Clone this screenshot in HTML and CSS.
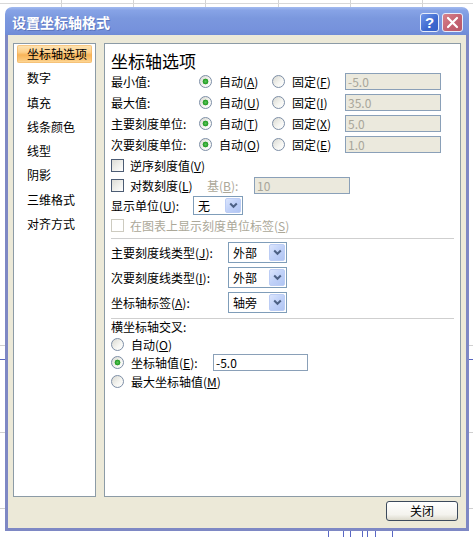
FILE: index.html
```html
<!DOCTYPE html>
<html lang="zh-CN">
<head>
<meta charset="utf-8">
<title>设置坐标轴格式</title>
<link rel="stylesheet" href="styles.css">
</head>
<body>
<div class="dialog">
  <div class="titlebar">
    <span class="title">设置坐标轴格式</span>
    <div class="tb-buttons">
      <span class="tb-btn help">?</span>
      <span class="tb-btn close">
        <svg width="13" height="13" viewBox="0 0 13 13"><path d="M2 2 L11 11 M11 2 L2 11" stroke="#fff" stroke-width="2.2" stroke-linecap="round"/></svg>
      </span>
    </div>
  </div>
  <div class="client">
    <div class="panels">
      <ul class="nav">
        <li class="active">坐标轴选项</li>
        <li>数字</li>
        <li>填充</li>
        <li>线条颜色</li>
        <li>线型</li>
        <li>阴影</li>
        <li>三维格式</li>
        <li>对齐方式</li>
      </ul>
      <div class="pane">
        <h1 class="pane-title">坐标轴选项</h1>

        <div class="row">
          <span class="lbl">最小值:</span>
          <span class="opt"><span class="radio on"></span>自动(<u>A</u>)</span>
          <span class="opt"><span class="radio"></span>固定(<u>F</u>)</span>
          <span class="field disabled">-5.0</span>
        </div>
        <div class="row">
          <span class="lbl">最大值:</span>
          <span class="opt"><span class="radio on"></span>自动(<u>U</u>)</span>
          <span class="opt"><span class="radio"></span>固定(<u>I</u>)</span>
          <span class="field disabled">35.0</span>
        </div>
        <div class="row">
          <span class="lbl">主要刻度单位:</span>
          <span class="opt"><span class="radio on"></span>自动(<u>T</u>)</span>
          <span class="opt"><span class="radio"></span>固定(<u>X</u>)</span>
          <span class="field disabled">5.0</span>
        </div>
        <div class="row">
          <span class="lbl">次要刻度单位:</span>
          <span class="opt"><span class="radio on"></span>自动(<u>O</u>)</span>
          <span class="opt"><span class="radio"></span>固定(<u>E</u>)</span>
          <span class="field disabled">1.0</span>
        </div>

        <div class="crow">
          <span class="check"></span>逆序刻度值(<u>V</u>)
        </div>
        <div class="crow">
          <span class="cgroup"><span class="check"></span>对数刻度(<u>L</u>)</span>
          <span class="base-lbl">基(<u>B</u>):</span>
          <span class="field disabled">10</span>
        </div>
        <div class="crow">
          <span class="unit-lbl">显示单位(<u>U</u>):</span>
          <span class="combo small"><span class="combo-val">无</span><span class="combo-btn"><svg width="9" height="7" viewBox="0 0 9 7"><path d="M1.2 1.5 L4.5 4.8 L7.8 1.5" fill="none" stroke="#4d6185" stroke-width="2"/></svg></span></span>
        </div>
        <div class="crow dim">
          <span class="check off"></span>在图表上显示刻度单位标签(<u>S</u>)
        </div>

        <div class="sep first"></div>

        <div class="srow">
          <span class="sel-lbl">主要刻度线类型(<u>J</u>):</span>
          <span class="combo"><span class="combo-val">外部</span><span class="combo-btn"><svg width="9" height="7" viewBox="0 0 9 7"><path d="M1.2 1.5 L4.5 4.8 L7.8 1.5" fill="none" stroke="#4d6185" stroke-width="2"/></svg></span></span>
        </div>
        <div class="srow">
          <span class="sel-lbl">次要刻度线类型(<u>I</u>):</span>
          <span class="combo"><span class="combo-val">外部</span><span class="combo-btn"><svg width="9" height="7" viewBox="0 0 9 7"><path d="M1.2 1.5 L4.5 4.8 L7.8 1.5" fill="none" stroke="#4d6185" stroke-width="2"/></svg></span></span>
        </div>
        <div class="srow">
          <span class="sel-lbl">坐标轴标签(<u>A</u>):</span>
          <span class="combo"><span class="combo-val">轴旁</span><span class="combo-btn"><svg width="9" height="7" viewBox="0 0 9 7"><path d="M1.2 1.5 L4.5 4.8 L7.8 1.5" fill="none" stroke="#4d6185" stroke-width="2"/></svg></span></span>
        </div>

        <div class="sep second"></div>

        <div class="hrow">横坐标轴交叉:</div>
        <div class="rrow"><span class="radio"></span>自动(<u>O</u>)</div>
        <div class="rrow">
          <span class="rgroup"><span class="radio on"></span>坐标轴值(<u>E</u>):</span>
          <span class="field wide">-5.0</span>
        </div>
        <div class="rrow"><span class="radio"></span>最大坐标轴值(<u>M</u>)</div>
      </div>
    </div>
    <div class="footer">
      <button class="btn">关闭</button>
    </div>
  </div>
</div>
</body>
</html>
```

FILE: styles.css
```css
html, body {
  margin: 0;
  padding: 0;
}

body {
  width: 473px;
  height: 537px;
  overflow: hidden;
  font-family: "Noto Sans CJK SC", "Liberation Sans", sans-serif;
  font-size: 12px;
  color: #000;
  background-color: #fff;
  background-image:
    linear-gradient(#d8d8d8, #d8d8d8),
    repeating-linear-gradient(90deg, transparent 0 61px, #d4d4d4 61px 62px, transparent 62px 72.2px),
    linear-gradient(#d0d0d0, #d0d0d0),
    linear-gradient(#5866c0, #5866c0),
    linear-gradient(#d0d0d0, #d0d0d0),
    linear-gradient(#d0d0d0, #d0d0d0),
    linear-gradient(90deg, transparent 328px, #5a68c4 328px 329px, transparent 329px 343px, #5a68c4 343px 344px, transparent 344px 350px, #5a68c4 350px 351px, transparent 351px 362px, #5a68c4 362px 363px, transparent 363px 367px, #5a68c4 367px 368px, transparent 368px 375px, #5a68c4 375px 376px, transparent 376px 392px, #5a68c4 392px 393px, transparent 393px);
  background-size:
    100% 1px,
    100% 7px,
    100% 1px,
    100% 1px,
    100% 1px,
    100% 1px,
    100% 6px;
  background-position:
    0 3px,
    0 0,
    0 345px,
    0 359px,
    0 432px,
    0 508px,
    0 531px;
  background-repeat: no-repeat;
}

.dialog {
  margin: 7px 0 0 5px;
  width: 464px;
  height: 524px;
  display: flex;
  flex-direction: column;
}

/* Title bar */
.titlebar {
  height: 28px;
  flex: none;
  box-sizing: border-box;
  border-radius: 7px 7px 0 0;
  background: linear-gradient(#a3bbef 0%, #87a3e6 12%, #7b98de 40%, #7692dc 80%, #6f8bd6 100%);
  display: flex;
  justify-content: space-between;
  align-items: flex-start;
  padding: 0 6px 0 7px;
}

.title {
  color: #fff;
  font-size: 14px;
  font-weight: bold;
  line-height: 16px;
  margin-top: 7px;
  letter-spacing: 0;
  text-shadow: 1px 1px 0 rgba(60, 80, 150, 0.45);
}

.tb-buttons {
  display: flex;
  gap: 3px;
  margin-top: 6px;
}

.tb-btn {
  width: 19px;
  height: 19px;
  box-sizing: border-box;
  border: 1px solid #e6ecfa;
  border-radius: 3px;
  display: flex;
  align-items: center;
  justify-content: center;
}

.help {
  background: linear-gradient(135deg, #6f95e8, #3d68cf 60%, #3560c8);
  color: #fff;
  font-family: "Liberation Sans", sans-serif;
  font-weight: bold;
  font-size: 15px;
  line-height: 17px;
}

.close {
  width: 21px;
  background: linear-gradient(135deg, #d8838c, #c26070 60%, #b85868);
}

/* Client area */
.client {
  flex: 1;
  background: #ece9d8;
  border: 3px solid #7e88c4;
  border-top: 0;
  padding: 8px 5px 0 5px;
  display: flex;
  flex-direction: column;
}

.panels {
  display: flex;
  gap: 8px;
  height: 454px;
  flex: none;
}

.nav {
  width: 83px;
  box-sizing: border-box;
  margin: 0;
  padding: 1px 3px;
  list-style: none;
  background: #fff;
  border: 1px solid #8c9ba6;
}

.nav li {
  height: 18px;
  line-height: 18px;
  padding-left: 10px;
  margin-bottom: 6.3px;
  white-space: nowrap;
}

.nav li.active {
  border-radius: 2px;
  background: linear-gradient(#fee6b8 0%, #fccf8a 40%, #f8b458 55%, #fbc97c 85%, #fde0aa 100%);
  box-shadow: inset 0 0 0 1px rgba(240, 170, 80, 0.5);
}

.pane {
  width: 357px;
  box-sizing: border-box;
  background: #fff;
  border: 1px solid #8c9ba6;
  padding: 7px 6px 0 6px;
}

.pane-title {
  margin: 0;
  font-size: 17px;
  font-weight: normal;
  line-height: 20px;
}

/* Min/max rows */
.row {
  display: flex;
  align-items: center;
  height: 21px;
  white-space: nowrap;
}

.lbl {
  width: 88px;
}

.opt {
  display: flex;
  align-items: center;
  width: 73px;
}

.radio {
  flex: none;
  width: 13px;
  height: 13px;
  box-sizing: border-box;
  border-radius: 50%;
  border: 1px solid #7d8ea6;
  background: linear-gradient(135deg, #d9d9d2, #f6f6f2 60%, #fff);
  margin-right: 7px;
}

.radio.on {
  background:
    radial-gradient(circle at 50% 50%, #5cc45c 0, #2ea62e 2px, #219821 2.6px, transparent 3.2px),
    linear-gradient(135deg, #d9d9d2, #f6f6f2 60%, #fff);
}

.field {
  flex: none;
  width: 96px;
  height: 17px;
  box-sizing: border-box;
  border: 1px solid #8aa0b8;
  background: #fff;
  padding-left: 2px;
  line-height: 15px;
  font-size: 12px;
}

.field.disabled {
  background: #ebe9dd;
  color: #a8a69a;
}

/* Checkbox rows */
.crow {
  display: flex;
  align-items: center;
  height: 20px;
  white-space: nowrap;
}

.check {
  flex: none;
  width: 13px;
  height: 13px;
  box-sizing: border-box;
  border: 1px solid #4c5c74;
  background: linear-gradient(135deg, #dcdcd6, #f2f2ee 60%, #fff);
  margin-right: 6px;
}

.check.off {
  border-color: #cdcbc0;
  background: #fff;
}

.crow.dim {
  color: #aca899;
}

.cgroup {
  display: flex;
  align-items: center;
  width: 96px;
}

.base-lbl {
  width: 47px;
  color: #aca899;
}

.unit-lbl {
  width: 82px;
}

/* Combo boxes */
.combo {
  flex: none;
  display: flex;
  align-items: stretch;
  width: 59px;
  height: 21px;
  box-sizing: border-box;
  border: 1px solid #7f9db9;
  background: #fff;
  padding: 1px;
}

.combo.small {
  width: 50px;
  height: 19px;
}

.combo-val {
  flex: 1;
  padding-left: 3px;
  display: flex;
  align-items: center;
}

.combo-btn {
  width: 16px;
  box-sizing: border-box;
  border: 1px solid #bccdf5;
  border-radius: 2px;
  background: linear-gradient(135deg, #dbe5fd, #c0d1f8 50%, #b1c5f3);
  display: flex;
  align-items: center;
  justify-content: center;
}

.sep {
  height: 1px;
  background: #cfcfcf;
  margin-right: 0;
}

.sep.first {
  margin-top: 3px;
  margin-bottom: 1px;
}

.sep.second {
  margin-top: 3px;
}

.srow {
  display: flex;
  align-items: center;
  height: 25px;
  white-space: nowrap;
}

.sel-lbl {
  width: 117px;
}

.hrow {
  height: 16px;
  line-height: 16px;
}

.rrow {
  display: flex;
  align-items: center;
  height: 18.5px;
  white-space: nowrap;
}

.rgroup {
  display: flex;
  align-items: center;
  width: 102px;
}

.field.wide {
  width: 95px;
}

/* Footer */
.footer {
  display: flex;
  justify-content: flex-end;
  margin-top: 4px;
  padding-right: 3px;
}

.btn {
  width: 72px;
  height: 20px;
  box-sizing: border-box;
  border: 1px solid #3c4a5c;
  border-radius: 3px;
  background: linear-gradient(#ffffff, #f4f3ee 70%, #dcd9cc);
  font-family: "Noto Sans CJK SC", sans-serif;
  font-size: 12px;
  line-height: 16px;
  padding: 0;
  color: #000;
}
```
